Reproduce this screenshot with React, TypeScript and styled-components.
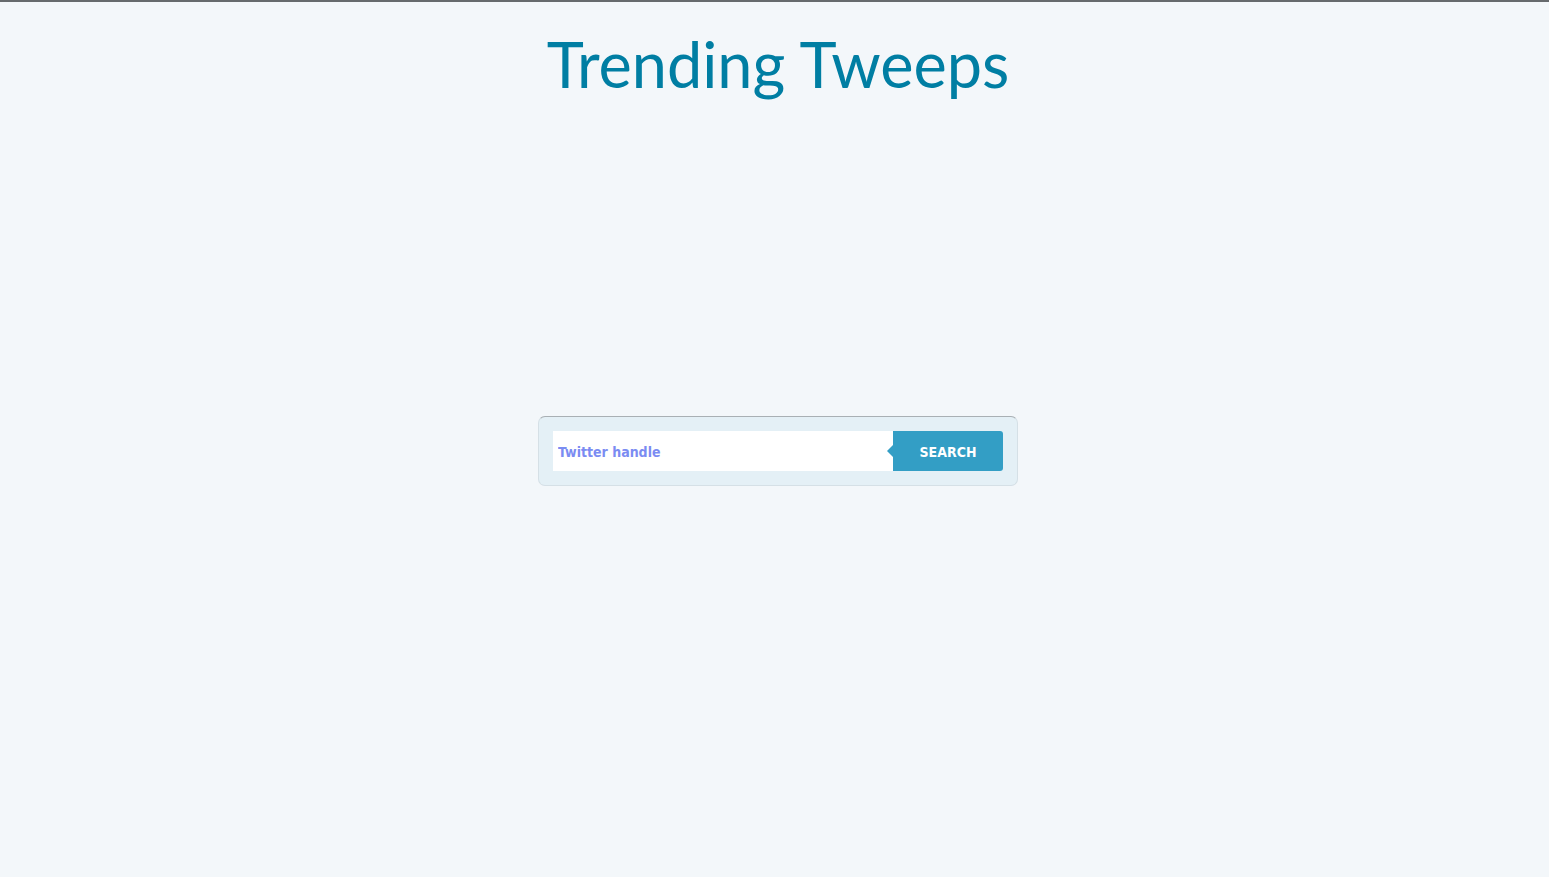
import React from "react";
import styled, { createGlobalStyle } from "styled-components";

const Global = createGlobalStyle`
  html, body { margin: 0; padding: 0; }
  body {
    background: #f3f7fa;
    border-top: 2px solid #666a6d;
    min-height: 875px;
    font-family: "Open Sans", sans-serif;
  }
`;

const Page = styled.div`
  display: flex;
  flex-direction: column;
  align-items: center;
  padding-left: 7px;
`;

const Title = styled.h1`
  margin: 22px 0 0;
  font-family: "Lato", "Noto Sans", sans-serif;
  font-weight: 400;
  font-size: 63px;
  line-height: 80px;
  color: #007ea3;
`;

const SearchBox = styled.form`
  margin-top: 312px;
  width: 480px;
  height: 70px;
  box-sizing: border-box;
  padding: 14px;
  display: flex;
  background: #e4f0f6;
  border: 1px solid #d5e0e6;
  border-top-color: #a9b0b4;
  border-radius: 7px;
`;

const Input = styled.input`
  flex: 1;
  height: 40px;
  box-sizing: border-box;
  border: none;
  outline: none;
  background: #fff;
  padding: 2px 5px 0;
  font-family: "DejaVu Sans Condensed", "DejaVu Sans", sans-serif;
  font-weight: bold;
  font-size: 14px;
  &::placeholder { color: #7b8cf2; }
`;

const Button = styled.button`
  position: relative;
  width: 110px;
  height: 40px;
  box-sizing: border-box;
  border: none;
  background: #339ec5;
  color: #fff;
  border-radius: 0 3px 3px 0;
  font-family: "DejaVu Sans Condensed", "DejaVu Sans", sans-serif;
  font-weight: bold;
  font-size: 14px;
  padding: 2px 0 0;
  &::before {
    content: "";
    position: absolute;
    left: -6px;
    top: 14px;
    border-style: solid;
    border-width: 6px 6px 6px 0;
    border-color: transparent #339ec5 transparent transparent;
  }
`;

export default function App() {
  return (
    <Page>
      <Global />
      <Title>Trending Tweeps</Title>
      <SearchBox onSubmit={(e) => e.preventDefault()}>
        <Input placeholder="Twitter handle" />
        <Button type="submit">SEARCH</Button>
      </SearchBox>
    </Page>
  );
}
